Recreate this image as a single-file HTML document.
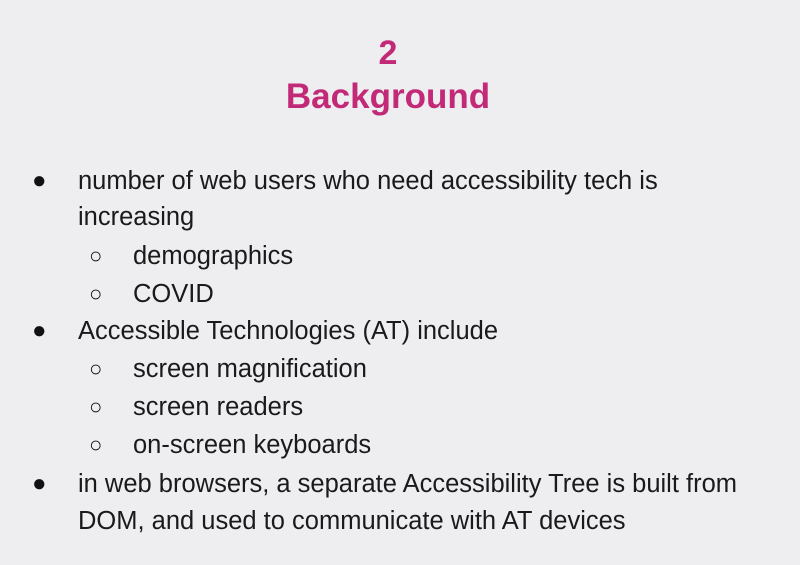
<!DOCTYPE html>
<html><head><meta charset="utf-8"><style>
body{margin:0;width:800px;height:565px;background:#eeedf0;overflow:hidden;font-family:"Liberation Sans",sans-serif;}
.t{position:absolute;left:0;width:776px;text-align:center;color:#c22a78;font-weight:bold;}
.l{position:absolute;white-space:nowrap;font-size:25.5px;color:#1a1a1a;line-height:30px;}
.b{position:absolute;font-size:24px;line-height:30px;color:#111;}
.c{position:absolute;font-size:22px;line-height:30px;color:#111;}
</style></head><body>
<div class="t" style="top:33px;font-size:34px;line-height:40px;">2</div>
<div class="t" style="top:77px;font-size:35px;line-height:40px;">Background</div>

<div class="b" style="left:32px;top:166px;">●</div>
<div class="l" style="left:78px;top:166px;">number of web users who need accessibility tech is</div>
<div class="l" style="left:78px;top:202px;">increasing</div>
<div class="c" style="left:89px;top:241px;">○</div>
<div class="l" style="left:133px;top:241px;">demographics</div>
<div class="c" style="left:89px;top:279px;">○</div>
<div class="l" style="left:133px;top:279px;">COVID</div>
<div class="b" style="left:32px;top:316px;">●</div>
<div class="l" style="left:78px;top:316px;">Accessible Technologies (AT) include</div>
<div class="c" style="left:89px;top:354px;">○</div>
<div class="l" style="left:133px;top:354px;">screen magnification</div>
<div class="c" style="left:89px;top:392px;">○</div>
<div class="l" style="left:133px;top:392px;">screen readers</div>
<div class="c" style="left:89px;top:430px;">○</div>
<div class="l" style="left:133px;top:430px;">on-screen keyboards</div>
<div class="b" style="left:32px;top:469px;">●</div>
<div class="l" style="left:78px;top:469px;">in web browsers, a separate Accessibility Tree is built from</div>
<div class="l" style="left:78px;top:506px;">DOM, and used to communicate with AT devices</div>
</body></html>
